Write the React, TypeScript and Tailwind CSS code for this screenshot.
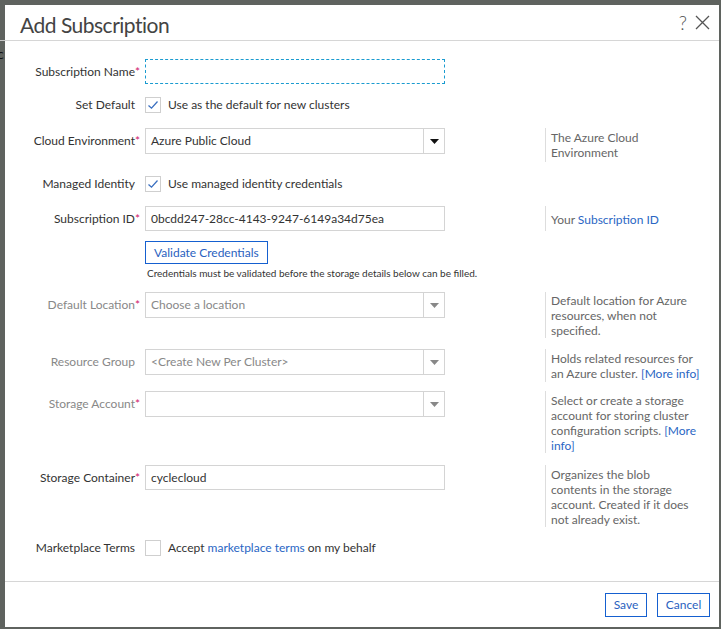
import React from "react";

const font = { fontFamily: 'Lato, "Open Sans", sans-serif' };

function Label({ text, required, muted }: { text: string; required?: boolean; muted?: boolean }) {
    return (
        <div className={`w-[136px] shrink-0 flex justify-end items-center ${muted ? "text-[#888]" : "text-[#333]"}`}>
            <span>{text}</span>
            <span className="w-[6px] text-[#d0206a]">{required ? "*" : ""}</span>
        </div>
    );
}

function Help({ children, className = "" }: { children: React.ReactNode; className?: string }) {
    return (
        <div className={`ml-[100px] border-l border-[#ddd] pl-[5px] pt-[1px] leading-[15px] text-[#666] whitespace-nowrap ${className}`}>
            {children}
        </div>
    );
}

function Select({ value, placeholder, disabled }: { value?: string; placeholder?: boolean; disabled?: boolean }) {
    return (
        <div className="w-[300px] h-[26px] ml-[4px] shrink-0 border border-[#d4d4d4] flex items-center bg-white">
            <span className={`flex-1 pl-[5px] ${placeholder ? "text-[#888]" : "text-[#333]"}`}>{value}</span>
            <div className="w-[21px] h-full border-l border-[#d4d4d4] flex items-center justify-center">
                <svg width="9" height="5" viewBox="0 0 9 5">
                    <path d="M0 0 L9 0 L4.5 5 Z" fill={disabled ? "#888" : "#111"} />
                </svg>
            </div>
        </div>
    );
}

function Input({ value, dashed }: { value?: string; dashed?: boolean }) {
    return (
        <div
            className={`w-[300px] h-[25px] ml-[4px] shrink-0 flex items-center pl-[5px] text-[#333] ${
                dashed ? "border border-dashed border-[#1a9bd0]" : "border border-[#d4d4d4]"
            }`}
        >
            {value}
        </div>
    );
}

function Check({ checked }: { checked?: boolean }) {
    return (
        <div className="ml-[4px] w-[16px] h-[16px] border border-[#cfcfcf] bg-white flex items-center justify-center shrink-0">
            {checked && (
                <svg width="12" height="10" viewBox="0 0 12 10">
                    <path d="M1.5 5.5 L4.5 8.2 L10.5 1.5" fill="none" stroke="#3a6fc0" strokeWidth="1.3" />
                </svg>
            )}
        </div>
    );
}

const link = "text-[#2a66c4]";

export default function App() {
    return (
        <div className="relative w-[721px] h-[629px] bg-[#5f635f] overflow-hidden text-[12px]" style={font}>
            {/* background page peeking out on the left */}
            <div className="absolute left-0 top-[40px] w-[5px] h-[1px] bg-[#c8c8c8]" />
            <div className="absolute left-0 top-[46px] w-[5px] overflow-hidden text-[14px] leading-[16px] text-[#111]">
                <span className="ml-[-3px]">c</span>
            </div>

            <div className="absolute left-[5px] top-[5px] w-[714px] h-[622px] bg-white flex flex-col">
                <div className="h-[36px] border-b border-[#d6d6d6] flex items-center justify-between pl-[15px] pr-[9px]">
                    <h1 className="text-[21px] tracking-[-0.5px] text-[#444] leading-none mt-[3px]">Add Subscription</h1>
                    <div className="flex items-center gap-[8px] text-[#555]">
                        <span className="text-[19px] font-light leading-none">?</span>
                        <svg width="15" height="15" viewBox="0 0 15 15">
                            <path d="M1 1 L14 14 M14 1 L1 14" stroke="#555" strokeWidth="1.3" />
                        </svg>
                    </div>
                </div>

                <div className="flex flex-col flex-1">
                    <div className="flex items-center mt-[18px]">
                        <Label text="Subscription Name" required />
                        <Input dashed />
                    </div>

                    <div className="flex items-center mt-[13px] h-[16px]">
                        <Label text="Set Default" />
                        <Check checked />
                        <span className="ml-[7px] text-[#333]">Use as the default for new clusters</span>
                    </div>

                    <div className="flex items-start mt-[15px]">
                        <div className="flex items-center h-[26px]">
                            <Label text="Cloud Environment" required />
                            <Select value="Azure Public Cloud" />
                        </div>
                        <Help className="pt-[2px] pb-[2px]">
                            The Azure Cloud
                            <br />
                            Environment
                        </Help>
                    </div>

                    <div className="flex items-center mt-[14px] h-[16px]">
                        <Label text="Managed Identity" />
                        <Check checked />
                        <span className="ml-[7px] text-[#333]">Use managed identity credentials</span>
                    </div>

                    <div className="flex items-start mt-[14px]">
                        <div className="flex items-center h-[25px]">
                            <Label text="Subscription ID" required />
                            <Input value="0bcdd247-28cc-4143-9247-6149a34d75ea" />
                        </div>
                        <Help className="h-[25px] flex items-center pt-0">
                            <span>
                                Your <span className={link}>Subscription ID</span>
                            </span>
                        </Help>
                    </div>

                    <div className="flex mt-[10px]">
                        <div className="w-[140px]" />
                        <button className="h-[23px] px-[8px] border border-[#1560d0] text-[#2a5fc0] bg-white">
                            Validate Credentials
                        </button>
                    </div>

                    <div className="flex mt-[3px]">
                        <div className="w-[142px]" />
                        <span className="text-[10px] leading-[12px] text-[#333]">
                            Credentials must be validated before the storage details below can be filled.
                        </span>
                    </div>

                    <div className="flex items-start mt-[13px]">
                        <div className="flex items-center h-[26px]">
                            <Label text="Default Location" required muted />
                            <Select value="Choose a location" placeholder disabled />
                        </div>
                        <Help>
                            Default location for Azure
                            <br />
                            resources, when not
                            <br />
                            specified.
                        </Help>
                    </div>

                    <div className="flex items-start mt-[11px]">
                        <div className="flex items-center h-[26px]">
                            <Label text="Resource Group" muted />
                            <Select value="<Create New Per Cluster>" placeholder disabled />
                        </div>
                        <Help className="pt-[2px] pb-[1px]">
                            Holds related resources for
                            <br />
                            an Azure cluster. <span className={link}>[More info]</span>
                        </Help>
                    </div>

                    <div className="flex items-start mt-[9px]">
                        <div className="flex items-center h-[26px]">
                            <Label text="Storage Account" required muted />
                            <Select disabled />
                        </div>
                        <Help className="pt-[2px]">
                            Select or create a storage
                            <br />
                            account for storing cluster
                            <br />
                            configuration scripts. <span className={link}>[More</span>
                            <br />
                            <span className={link}>info]</span>
                        </Help>
                    </div>

                    <div className="flex items-start mt-[12px]">
                        <div className="flex items-center h-[25px]">
                            <Label text="Storage Container" required />
                            <Input value="cyclecloud" />
                        </div>
                        <Help className="pt-[2px] leading-[14.5px]">
                            Organizes the blob
                            <br />
                            contents in the storage
                            <br />
                            account. Created if it does
                            <br />
                            not already exist.
                        </Help>
                    </div>

                    <div className="flex items-center mt-[13px] h-[16px]">
                        <Label text="Marketplace Terms" />
                        <Check />
                        <span className="ml-[7px] text-[#333]">
                            Accept <span className={link}>marketplace terms</span> on my behalf
                        </span>
                    </div>
                </div>

                <div className="h-[46px] border-t border-[#d6d6d6] flex items-center justify-end gap-[10px] pr-[9px]">
                    <button className="h-[24px] w-[42px] border border-[#1560d0] text-[#2a5fc0] bg-white">Save</button>
                    <button className="h-[24px] w-[53px] border border-[#1560d0] text-[#2a5fc0] bg-white">Cancel</button>
                </div>
            </div>
        </div>
    );
}
